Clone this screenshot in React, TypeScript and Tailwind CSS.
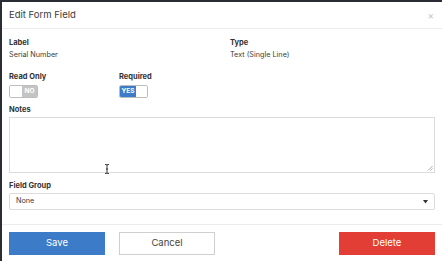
import React from "react";

function Toggle({ on, label }: { on: boolean; label: string }) {
  return (
    <div className="flex h-[13px] w-[29px] overflow-hidden rounded-[2px] border border-[#bdbdbd]">
      {on ? (
        <>
          <div className="flex w-[16px] items-center justify-center bg-[#3d7cc9] text-[6.5px] font-bold leading-none text-white">{label}</div>
          <div className="flex-1 bg-white" />
        </>
      ) : (
        <>
          <div className="w-[12px] bg-white" />
          <div className="flex flex-1 items-center justify-center bg-[#c4c4c4] text-[6.5px] font-bold leading-none text-white">{label}</div>
        </>
      )}
    </div>
  );
}

export default function App() {
  return (
    <div
      className="relative h-[261px] w-[442px] overflow-hidden bg-[#2a2d33] pl-[2px] pt-[2px]"
      style={{ fontFamily: "Inter, 'Liberation Sans', sans-serif" }}
    >
      <div className="flex h-[259px] w-[440px] flex-col bg-white">
        <div className="flex h-[27px] items-center justify-between border-b border-[#ececec] pl-[7px] pr-[8px]">
          <span className="text-[9.5px] text-[#3a3a3a]">Edit Form Field</span>
          <span className="text-[10px] leading-none text-[#c4c4c4]">×</span>
        </div>
        <div className="flex flex-col px-[7px] pt-[8px]">
          <div className="flex">
            <div className="w-[221px]">
              <div className="text-[7.5px] font-bold leading-[12px] text-[#333]">Label</div>
              <div className="text-[7.25px] leading-[12px] text-[#3c3c3c]">Serial Number</div>
            </div>
            <div>
              <div className="text-[7.5px] font-bold leading-[12px] text-[#333]">Type</div>
              <div className="text-[7.25px] leading-[12px] text-[#3c3c3c]">Text (Single Line)</div>
            </div>
          </div>
          <div className="mt-[10px] flex">
            <div className="w-[110px]">
              <div className="text-[7.5px] font-bold leading-[12px] text-[#333]">Read Only</div>
              <div className="mt-[2px]">
                <Toggle on={false} label="NO" />
              </div>
            </div>
            <div>
              <div className="text-[7.5px] font-bold leading-[12px] text-[#333]">Required</div>
              <div className="mt-[2px]">
                <Toggle on={true} label="YES" />
              </div>
            </div>
          </div>
          <div className="mt-[6px] text-[7.5px] font-bold leading-[12px] text-[#333]">Notes</div>
          <div className="relative mt-[1px] h-[56px] w-[426px] border border-[#dcdcdc] bg-white">
            <svg className="absolute bottom-[1px] right-[1px]" width="6" height="6" viewBox="0 0 6 6">
              <path d="M5.5 1 L1 5.5 M5.5 3.5 L3.5 5.5" stroke="#999" strokeWidth="0.8" />
            </svg>
          </div>
          <div className="mt-[7px] text-[7.5px] font-bold leading-[12px] text-[#333]">Field Group</div>
          <div className="mt-[1px] flex h-[17px] w-[426px] items-center justify-between rounded-[2px] border border-[#dcdcdc] pl-[6px] pr-[6px]">
            <span className="text-[7.25px] text-[#3c3c3c]">None</span>
            <svg width="5" height="4" viewBox="0 0 5 4">
              <path d="M0 0 L5 0 L2.5 3.5 Z" fill="#333" />
            </svg>
          </div>
        </div>
        <div className="mt-[14px] border-t border-[#ececec]" />
        <div className="flex items-center px-[7px] pt-[7px]">
          <div className="flex h-[23px] w-[96px] items-center justify-center bg-[#3b7bc8] text-[9.5px] text-white">Save</div>
          <div className="ml-[14px] flex h-[23px] w-[96px] items-center justify-center border border-[#cfcfcf] bg-white text-[9.5px] text-[#444]">Cancel</div>
          <div className="ml-auto flex h-[23px] w-[96px] items-center justify-center bg-[#e23e35] text-[9.5px] text-white">Delete</div>
        </div>
      </div>
      <svg className="absolute left-[104px] top-[164px]" width="6" height="10" viewBox="0 0 6 10">
        <path d="M1 0.5 H2.3 Q3 0.5 3 1.5 V8.5 Q3 9.5 2.3 9.5 H1 M5 0.5 H3.7 Q3 0.5 3 1.5 M5 9.5 H3.7 Q3 9.5 3 8.5 M2 5 H4" stroke="#222" strokeWidth="0.9" fill="none" />
      </svg>
    </div>
  );
}
